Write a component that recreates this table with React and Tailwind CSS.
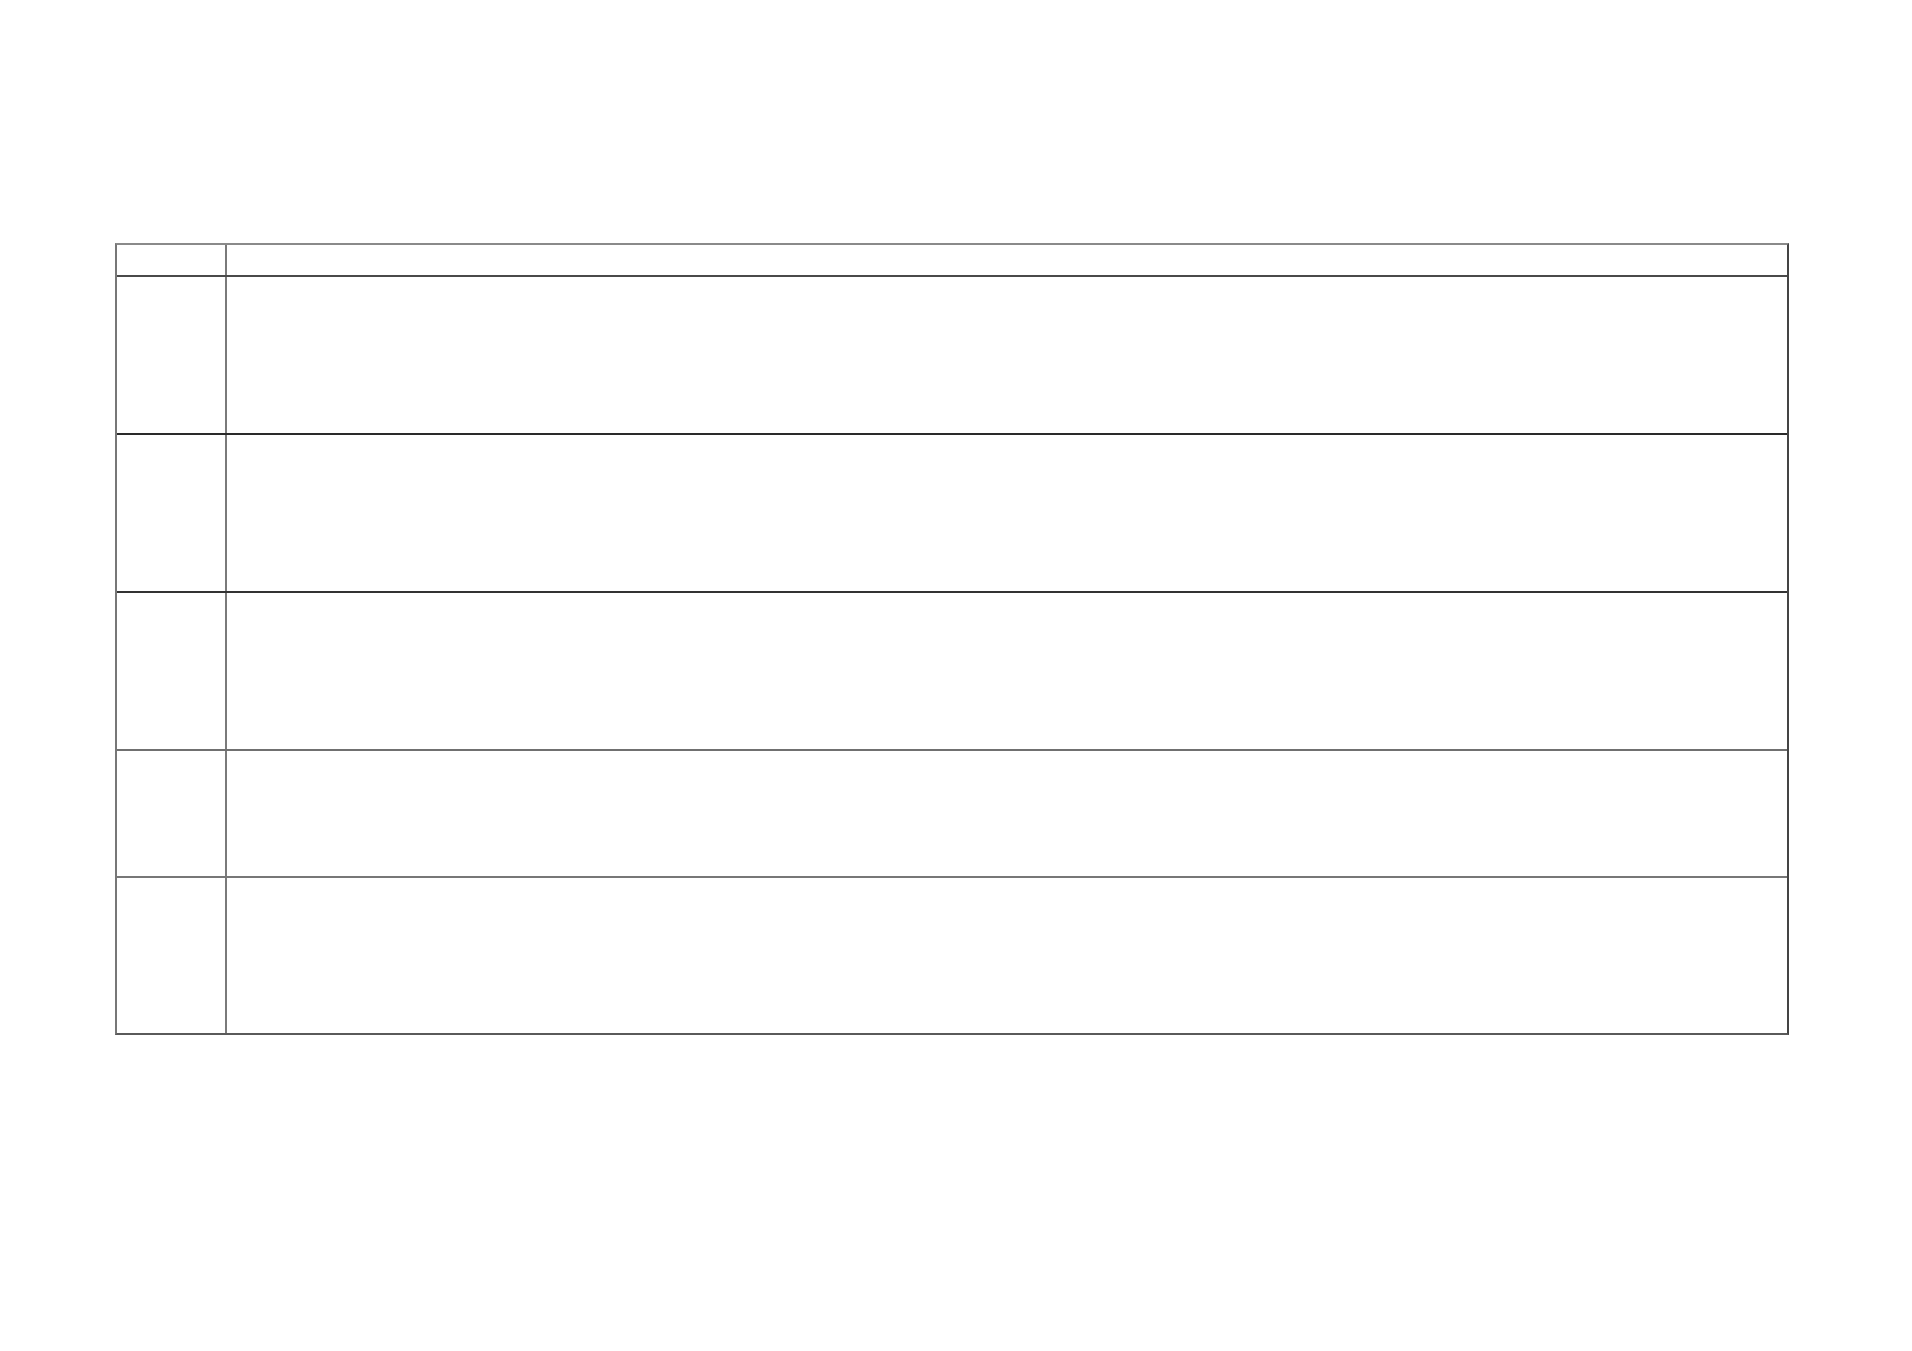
export default function App() {
  const rows = [
    { h: 'h-[32px]', line: 'border-b-2 border-[#4a4a4a]' },
    { h: 'h-[158px]', line: 'border-b-2 border-[#2a2a2a]' },
    { h: 'h-[158px]', line: 'border-b-2 border-[#333]' },
    { h: 'h-[158px]', line: 'border-b-2 border-[#707070]' },
    { h: 'h-[127px]', line: 'border-b-2 border-[#777]' },
    { h: 'h-[155px]', line: '' },
  ]

  return (
    <div className="min-h-screen bg-white pt-[243px] pl-[115px]">
      <div className="w-[1674px] border-2 border-[#777] border-t-[#8a8a8a] border-b-[#5a5a5a] border-r-[#444]">
        {rows.map((row, i) => (
          <div key={i} className={`flex ${row.h} ${row.line}`}>
            <div className="w-[110px] shrink-0 border-r-2 border-[#7a7a7a]"></div>
            <div className="flex-1"></div>
          </div>
        ))}
      </div>
    </div>
  )
}
